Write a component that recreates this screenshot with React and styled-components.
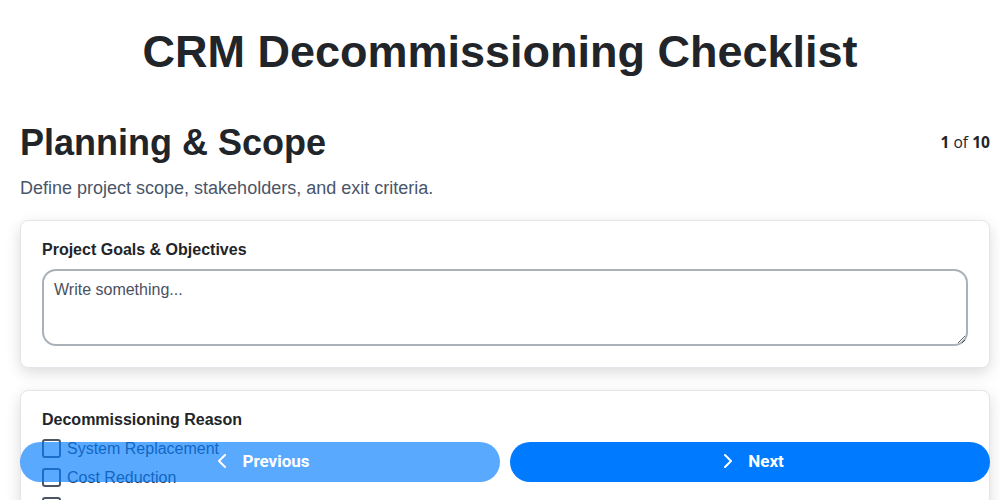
import React, { useState } from 'react';
import styled, { createGlobalStyle } from 'styled-components';
import { ChevronLeft, ChevronRight } from 'lucide-react';

const GlobalStyle = createGlobalStyle`
    html, body {
        margin: 0;
        padding: 0;
        background: #ffffff;
        overflow: hidden;
    }
    body {
        font-family: "Liberation Sans", Arial, sans-serif;
        color: #212529;
    }
    * {
        box-sizing: border-box;
    }
`;

const steps = [
    {
        title: 'Planning & Scope',
        description: 'Define project scope, stakeholders, and exit criteria.',
    },
];

const reasons = ['System Replacement', 'Cost Reduction', 'Vendor Sunset', 'Consolidation'];

export default function App() {
    const [step] = useState(0);
    const [goals, setGoals] = useState('');
    const [checked, setChecked] = useState({});

    const toggle = (name) => {
        setChecked({ ...checked, [name]: !checked[name] });
    };

    return (
        <>
            <GlobalStyle />
            <Page>
                <Title>CRM Decommissioning Checklist</Title>

                <StepHeader>
                    <StepTitle>{steps[step].title}</StepTitle>
                    <Counter>
                        <b>{step + 1}</b> of <b>10</b>
                    </Counter>
                </StepHeader>
                <StepDescription>{steps[step].description}</StepDescription>

                <Card>
                    <FieldLabel>Project Goals &amp; Objectives</FieldLabel>
                    <TextArea
                        placeholder="Write something..."
                        value={goals}
                        onChange={(ev) => setGoals(ev.target.value)}
                    />
                </Card>

                <Card>
                    <FieldLabel>Decommissioning Reason</FieldLabel>
                    <OptionList>
                        {reasons.map((reason) => (
                            <Option key={reason}>
                                <CheckBox
                                    type="checkbox"
                                    checked={!!checked[reason]}
                                    onChange={() => toggle(reason)}
                                />
                                {reason}
                            </Option>
                        ))}
                    </OptionList>
                </Card>
            </Page>

            <Footer>
                <NavButton disabled>
                    <ChevronLeft size={24} strokeWidth={2} />
                    Previous
                </NavButton>
                <NavButton>
                    <ChevronRight size={24} strokeWidth={2} />
                    Next
                </NavButton>
            </Footer>
        </>
    );
}

const Page = styled.div`
    padding: 0 10px 0 20px;
    width: 1000px;
`;

const Title = styled.h1`
    margin: 26px 10px 44px 0;
    font-size: 45px;
    font-weight: bold;
    text-align: center;
    color: #212529;
`;

const StepHeader = styled.div`
    display: flex;
    align-items: center;
    justify-content: space-between;
`;

const StepTitle = styled.h2`
    margin: 0;
    font-size: 36px;
    font-weight: bold;
    color: #212529;
`;

const Counter = styled.span`
    font-family: "Open Sans", sans-serif;
    font-size: 15.6px;
    color: #212529;
    margin-bottom: 2px;

    b {
        font-weight: 700;
    }
`;

const StepDescription = styled.p`
    margin: 14px 0 21px;
    font-size: 18px;
    color: #4a5568;
`;

const Card = styled.section`
    background: #ffffff;
    border: 1px solid #e3e5ea;
    border-radius: 8px;
    padding: 20px 21px 21px;
    margin-bottom: 22px;
    box-shadow: 0 5px 15px rgba(0, 0, 0, 0.14);
`;

const FieldLabel = styled.div`
    font-size: 16px;
    font-weight: bold;
    color: #212529;
    margin-bottom: 10px;
`;

const TextArea = styled.textarea`
    display: block;
    width: 100%;
    height: 77px;
    padding: 10px;
    border: 2px solid #aab1b9;
    border-radius: 14px;
    font-family: "Liberation Sans", Arial, sans-serif;
    font-size: 16px;
    color: #212529;
    outline: none;

    &::placeholder {
        color: #4b5060;
        opacity: 1;
    }
`;

const OptionList = styled.div`
    display: flex;
    flex-direction: column;
    gap: 10px;
`;

const Option = styled.label`
    display: flex;
    align-items: center;
    gap: 6px;
    font-size: 16px;
    color: #374151;
    height: 19px;
`;

const CheckBox = styled.input`
    appearance: none;
    margin: 0;
    width: 19px;
    height: 19px;
    border: 2px solid #4b5563;
    border-radius: 3px;
    background: #ffffff;
`;

const Footer = styled.div`
    position: fixed;
    left: 20px;
    right: 10px;
    bottom: 18px;
    display: grid;
    grid-template-columns: 1fr 1fr;
    gap: 10px;
`;

const NavButton = styled.button`
    display: flex;
    align-items: center;
    justify-content: center;
    gap: 8px;
    height: 40px;
    padding: 0 0 2px;
    border: none;
    border-radius: 20px;
    background: #007bff;
    color: #ffffff;
    font-family: Roboto, sans-serif;
    font-size: 17px;
    font-weight: 700;
    cursor: pointer;

    &:disabled {
        opacity: 0.65;
        cursor: default;
    }
`;
